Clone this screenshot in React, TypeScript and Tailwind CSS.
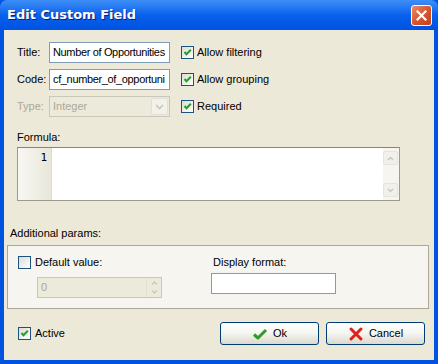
import React from "react";

const FONT = { fontFamily: "Tahoma, 'Liberation Sans', Arial, sans-serif" };

const Check = ({ checked }: { checked: boolean }) => (
  <span className="relative inline-block w-[13px] h-[13px] shrink-0 border border-[#1c5180] bg-gradient-to-br from-[#dcdcd4] to-[#ffffff]">
    {checked && (
      <svg viewBox="0 0 11 11" className="absolute left-0 top-0 w-[11px] h-[11px]">
        <path d="M2.5 5 L4.5 7.2 L8.8 2.8" fill="none" stroke="#21a121" strokeWidth="2" />
      </svg>
    )}
  </span>
);

const CheckRow = ({ label, checked }: { label: string; checked: boolean }) => (
  <div className="flex items-center gap-[3px] h-[21px]">
    <Check checked={checked} />
    <span className="text-[11px] text-black">{label}</span>
  </div>
);

const Label = ({ children }: { children: React.ReactNode }) => (
  <span className="w-[32px] shrink-0 text-[11px] text-black">{children}</span>
);

const TextBox = ({ value, w }: { value: string; w: string }) => (
  <div className={`${w} h-[21px] border border-[#7f9db9] bg-white flex items-center pl-[3px] overflow-hidden`}>
    <span className="text-[11px] tracking-[-0.35px] text-black whitespace-nowrap">{value}</span>
  </div>
);

const XPButton = ({ children }: { children: React.ReactNode }) => (
  <button
    type="button"
    className="w-[99px] h-[23px] rounded-[3px] border border-[#003c74] bg-gradient-to-b from-[#ffffff] via-[#f4f4f0] to-[#dcd9cc] flex items-center justify-center gap-[5px] text-[11px] text-black"
  >
    {children}
  </button>
);

export default function App() {
  return (
    <div className="w-[438px] h-[364px] flex flex-col bg-[#0053e1] select-none" style={FONT}>
      {/* title bar */}
      <div className="h-[30px] shrink-0 rounded-t-[7px] bg-gradient-to-b from-[#3d8ff6] via-[#0860ec] to-[#0052e0] flex items-center pl-[7px] pr-[6px]">
        <span
          className="text-[13px] font-bold text-white flex-1"
          style={{ fontFamily: "'Trebuchet MS', 'DejaVu Sans', 'Liberation Sans', sans-serif", textShadow: "1px 1px 0 #0a1f7a" }}
        >
          Edit Custom Field
        </span>
        <div className="w-[21px] h-[21px] rounded-[3px] border border-white bg-gradient-to-br from-[#e98a6c] via-[#d9552f] to-[#c2401f] flex items-center justify-center">
          <svg viewBox="0 0 11 11" className="w-[11px] h-[11px]">
            <path d="M1.5 1.5 L9.5 9.5 M9.5 1.5 L1.5 9.5" stroke="#ffffff" strokeWidth="2.2" strokeLinecap="square" />
          </svg>
        </div>
      </div>

      {/* client */}
      <div className="flex-1 mx-[4px] mb-[4px] bg-[#ece9d8] flex flex-col pl-[13px] pr-[5px] pt-[12px]">
        <div className="flex gap-[11px]">
          <div className="flex flex-col gap-[6px]">
            <div className="flex items-center">
              <Label>Title:</Label>
              <TextBox w="w-[121px]" value="Number of Opportunities" />
            </div>
            <div className="flex items-center">
              <Label>Code:</Label>
              <TextBox w="w-[121px]" value="cf_number_of_opportuni" />
            </div>
            <div className="flex items-center">
              <Label>
                <span className="text-[#aca899]">Type:</span>
              </Label>
              <div className="w-[121px] h-[21px] border border-[#c9c7ba] bg-[#ebeadb] flex items-center">
                <span className="flex-1 pl-[3px] text-[11px] text-[#aca899]">Integer</span>
                <div className="w-[17px] h-[17px] mr-[1px] rounded-[2px] bg-[#f2f1ea] border border-[#e2e0d4] flex items-center justify-center">
                  <svg viewBox="0 0 9 6" className="w-[9px] h-[6px]">
                    <path d="M1 1 L4.5 4.5 L8 1" fill="none" stroke="#c9c7ba" strokeWidth="1.6" />
                  </svg>
                </div>
              </div>
            </div>
          </div>
          <div className="flex flex-col gap-[6px]">
            <CheckRow label="Allow filtering" checked />
            <CheckRow label="Allow grouping" checked />
            <CheckRow label="Required" checked />
          </div>
        </div>

        <span className="mt-[14px] text-[11px] text-black leading-[13px]">Formula:</span>

        <div className="mt-[3px] w-[383px] h-[54px] border border-[#9d9a8f] border-t-[#888578] bg-white flex">
          <div className="w-[34px] h-full bg-gradient-to-r from-[#f8f7f2] to-[#e9e7da] border-r border-[#dedbd0] flex justify-end pr-[4px] pt-[3px]">
            <span className="text-[11px] text-black leading-[13px]" style={{ fontFamily: "'DejaVu Sans Mono', 'Liberation Mono', monospace" }}>1</span>
          </div>
          <div className="flex-1" />
          <div className="w-[16px] h-full bg-[#f6f5ef] flex flex-col justify-between py-[3px] pr-[1px]">
            <div className="w-[15px] h-[14px] rounded-[2px] border border-[#e6e4da] bg-[#f1f0ea] flex items-center justify-center">
              <svg viewBox="0 0 7 5" className="w-[7px] h-[5px]">
                <path d="M1 4 L3.5 1.5 L6 4" fill="none" stroke="#c8c6bb" strokeWidth="1.4" />
              </svg>
            </div>
            <div className="w-[15px] h-[14px] rounded-[2px] border border-[#e6e4da] bg-[#f1f0ea] flex items-center justify-center">
              <svg viewBox="0 0 7 5" className="w-[7px] h-[5px]">
                <path d="M1 1 L3.5 3.5 L6 1" fill="none" stroke="#c8c6bb" strokeWidth="1.4" />
              </svg>
            </div>
          </div>
        </div>

        <span className="-ml-[7px] mt-[26px] text-[11px] text-black leading-[13px]">Additional params:</span>

        <div className="-ml-[10px] mt-[5px] w-[422px] h-[64px] border border-[#aca899] bg-[#f6f5f0] flex pl-[10px] pt-[10px]">
          <div className="flex flex-col w-[193px]">
            <div className="flex items-center gap-[4px]">
              <Check checked={false} />
              <span className="text-[11px] text-black leading-[13px]">Default value:</span>
            </div>
            <div className="ml-[19px] mt-[8px] w-[125px] h-[21px] border border-[#c9c7ba] bg-[#ebeadb] flex items-center">
              <span className="flex-1 pl-[3px] text-[11px] text-[#aca899]">0</span>
              <div className="w-[15px] h-[19px] flex flex-col border-l border-[#e2e0d4]">
                <div className="flex-1 flex items-center justify-center">
                  <svg viewBox="0 0 7 4" className="w-[7px] h-[4px]">
                    <path d="M1 3.5 L3.5 1 L6 3.5" fill="none" stroke="#c9c7ba" strokeWidth="1.3" />
                  </svg>
                </div>
                <div className="flex-1 flex items-center justify-center">
                  <svg viewBox="0 0 7 4" className="w-[7px] h-[4px]">
                    <path d="M1 0.5 L3.5 3 L6 0.5" fill="none" stroke="#c9c7ba" strokeWidth="1.3" />
                  </svg>
                </div>
              </div>
            </div>
          </div>
          <div className="flex flex-col">
            <span className="ml-[2px] text-[11px] text-black leading-[13px]">Display format:</span>
            <div className="mt-[4px] w-[125px] h-[21px] border border-[#7f9db9] bg-white" />
          </div>
        </div>

        <div className="mt-[13px] flex items-center">
          <div className="ml-[1px] flex items-center gap-[4px] w-[202px]">
            <Check checked />
            <span className="text-[11px] text-black">Active</span>
          </div>
          <div className="flex gap-[7px]">
            <XPButton>
              <svg viewBox="0 0 16 16" className="w-[16px] h-[16px]">
                <path d="M2 8.5 L6 12 L14 4" fill="none" stroke="#2f9a2a" strokeWidth="3" strokeLinejoin="round" />
              </svg>
              <span>Ok</span>
            </XPButton>
            <XPButton>
              <svg viewBox="0 0 16 16" className="w-[16px] h-[16px]">
                <path d="M3 3 L13 13 M13 3 L3 13" stroke="#e0201a" strokeWidth="3" strokeLinecap="round" />
              </svg>
              <span>Cancel</span>
            </XPButton>
          </div>
        </div>
      </div>
    </div>
  );
}
